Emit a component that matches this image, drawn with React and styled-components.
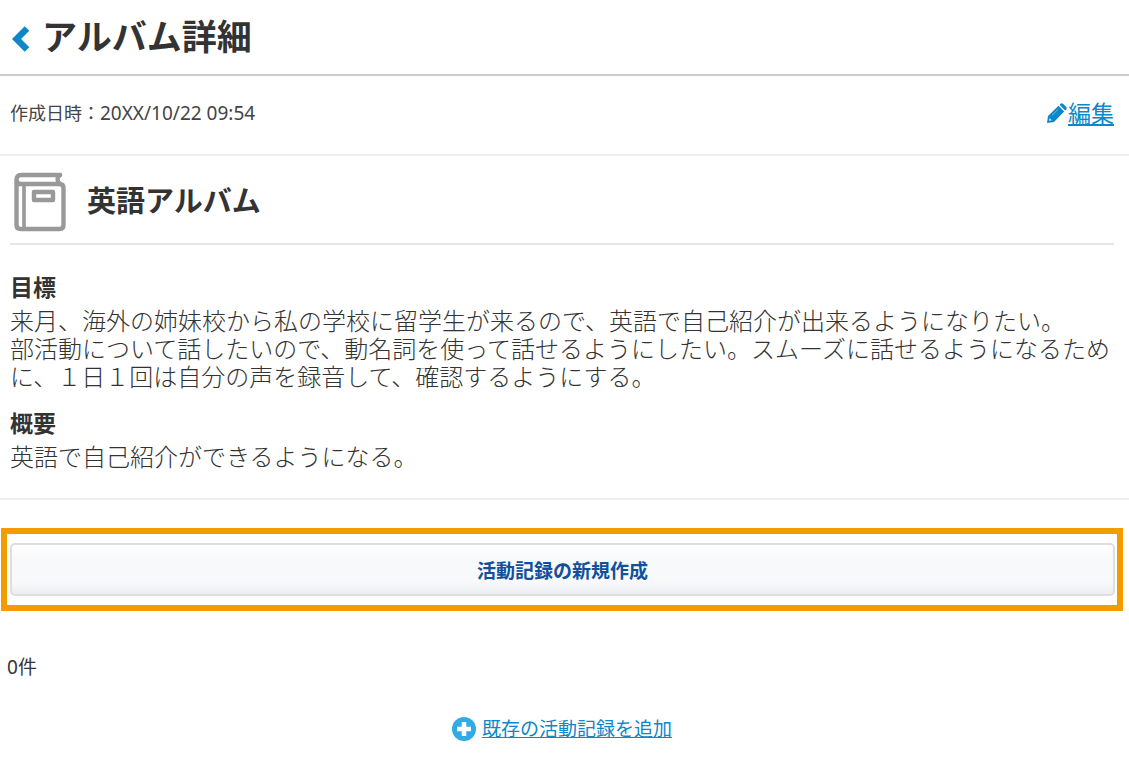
import styled, { createGlobalStyle } from "styled-components";

const album = {
	createdAt: "20XX/10/22 09:54",
	name: "英語アルバム",
	sections: [
		{
			title: "目標",
			body: "来月、海外の姉妹校から私の学校に留学生が来るので、英語で自己紹介が出来るようになりたい。\n部活動について話したいので、動名詞を使って話せるようにしたい。スムーズに話せるようになるために、１日１回は自分の声を録音して、確認するようにする。",
		},
		{ title: "概要", body: "英語で自己紹介ができるようになる。" },
	],
	records: [],
};

const GlobalStyle = createGlobalStyle`
	* {
		box-sizing: border-box;
	}
	body {
		margin: 0;
		background: #fff;
		color: #333;
		font-family: "Noto Sans", "Noto Sans CJK JP", sans-serif;
	}
	h1, h2, h3, p {
		margin: 0;
	}
`;

const BackIcon = () => (
	<svg width="18" height="26" viewBox="0 0 18 26" aria-hidden="true">
		<path d="M15 2.500 4.500 13 15 23.500" fill="none" stroke="#0c87c9" strokeWidth="6.500" />
	</svg>
);

const PencilIcon = () => (
	<svg width="20" height="20" viewBox="0 0 20 20" aria-hidden="true">
		<path
			fill="#0c87c9"
			d="M0 20 1 13 11.500 2.800 17.200 8.500 7 19ZM12.500 1.800 13.600.7q1.200-1 2.400 0l3.300 3.300q1 1.200 0 2.400L18.200 7.500Z"
		/>
		<path d="m5 12.300 6-5.900" stroke="#8cc8e8" strokeWidth=".8" />
		<path d="m2.700 15.300 2 2-2.200.500-.4-.4Z" fill="#fff" />
	</svg>
);

const BookIcon = () => (
	<svg width="52" height="60" viewBox="0 0 52 60" aria-hidden="true">
		<g fill="none" stroke="#999" strokeWidth="4.400" strokeLinejoin="round" strokeLinecap="round">
			<path d="M46 3H7Q2.500 3 2.500 8v45q0 4 4 4h39q4 0 4-4V16q0-4-4-4H7Q2.500 12 2.500 8" />
			<path d="M46 3q-5 4 0 9" />
			<path d="M10 13v44" strokeWidth="3.600" />
			<path d="M20 20h19v8H20Z" />
		</g>
	</svg>
);

const PlusIcon = () => (
	<svg width="24" height="24" viewBox="0 0 24 24" aria-hidden="true">
		<circle cx="12" cy="12" r="12" fill="#30abe6" />
		<path d="M12 5v14M5 12h14" stroke="#fff" strokeWidth="4.500" />
	</svg>
);

export default function App() {
	return (
		<>
			<GlobalStyle />
			<Header>
				<BackLink href="#albums" aria-label="戻る">
					<BackIcon />
				</BackLink>
				<Title>アルバム詳細</Title>
			</Header>
			<main>
				<MetaRow>
					<Created>
						作成日時：<time>{album.createdAt}</time>
					</Created>
					<EditLink href="#edit">
						<PencilIcon />
						<span>編集</span>
					</EditLink>
				</MetaRow>
				<Detail>
					<AlbumHead>
						<BookIcon />
						<AlbumName>{album.name}</AlbumName>
					</AlbumHead>
					{album.sections.map(({ title, body }) => (
						<Section key={title}>
							<SectionTitle>{title}</SectionTitle>
							<SectionBody>{body}</SectionBody>
						</Section>
					))}
				</Detail>
				<Highlight>
					<CreateButton type="button">活動記録の新規作成</CreateButton>
				</Highlight>
				<Count>{album.records.length}件</Count>
				<AddRow>
					<AddLink href="#add">
						<PlusIcon />
						<span>既存の活動記録を追加</span>
					</AddLink>
				</AddRow>
			</main>
		</>
	);
}

const Header = styled.header`
	display: flex;
	align-items: center;
	gap: 12px;
	height: 76px;
	padding: 0 15px 0 12px;
	border-bottom: 2px solid #ccc;
`;

const BackLink = styled.a`
	display: flex;
	padding-top: 4px;
`;

const Title = styled.h1`
	font-size: 35px;
	line-height: 40px;
`;

const MetaRow = styled.div`
	display: flex;
	align-items: center;
	justify-content: space-between;
	height: 80px;
	padding: 0 15px 4px 10px;
	border-bottom: 2px solid #eee;
`;

const Created = styled.p`
	font-size: 18px;
	line-height: 28px;
	color: #444;

	time {
		font-size: 19px;
	}
`;

const EditLink = styled.a`
	display: flex;
	align-items: center;
	gap: 1px;
	color: #0c87c9;
	font-size: 23px;
	line-height: 28px;
	text-decoration: none;

	span {
		text-decoration: underline;
	}
`;

const Detail = styled.article`
	padding: 0 15px 27px 10px;
	border-bottom: 2px solid #eee;
`;

const AlbumHead = styled.div`
	display: flex;
	align-items: center;
	gap: 21px;
	height: 89px;
	margin-bottom: 28px;
	padding: 4px 4px 0;
	border-bottom: 2px solid #e6e6e6;
`;

const AlbumName = styled.h2`
	padding-bottom: 2px;
	font-size: 29px;
	line-height: 36px;
`;

const Section = styled.section`
	& + & {
		margin-top: 18px;
	}
`;

const SectionTitle = styled.h3`
	margin-bottom: 6px;
	font-size: 23px;
	line-height: 28px;
`;

const SectionBody = styled.p`
	font-size: 24px;
	font-weight: 300;
	line-height: 28px;
	white-space: pre-line;
`;

const Highlight = styled.div`
	margin: 28px 6px 0 1px;
	padding: 9px 2px 9px 3px;
	border: 6px solid #f39c00;
`;

const CreateButton = styled.button`
	display: block;
	width: 100%;
	height: 53px;
	padding: 0;
	border: 2px solid #dcdee0;
	border-radius: 5px;
	background: linear-gradient(#fff, #f8f9fb 25%, #f8f9fb 75%, #eceef1);
	color: #11509d;
	font-family: inherit;
	font-size: 19px;
	font-weight: 700;
	cursor: pointer;
`;

const Count = styled.p`
	margin: 42px 7px 0;
	font-size: 19px;
	line-height: 28px;
`;

const AddRow = styled.div`
	display: flex;
	justify-content: center;
	margin: 34px 5px 28px 0;
`;

const AddLink = styled.a`
	display: flex;
	align-items: center;
	gap: 6px;
	color: #0c87c9;
	font-size: 19px;
	line-height: 28px;
	text-decoration: none;

	span {
		text-decoration: underline;
	}
`;
